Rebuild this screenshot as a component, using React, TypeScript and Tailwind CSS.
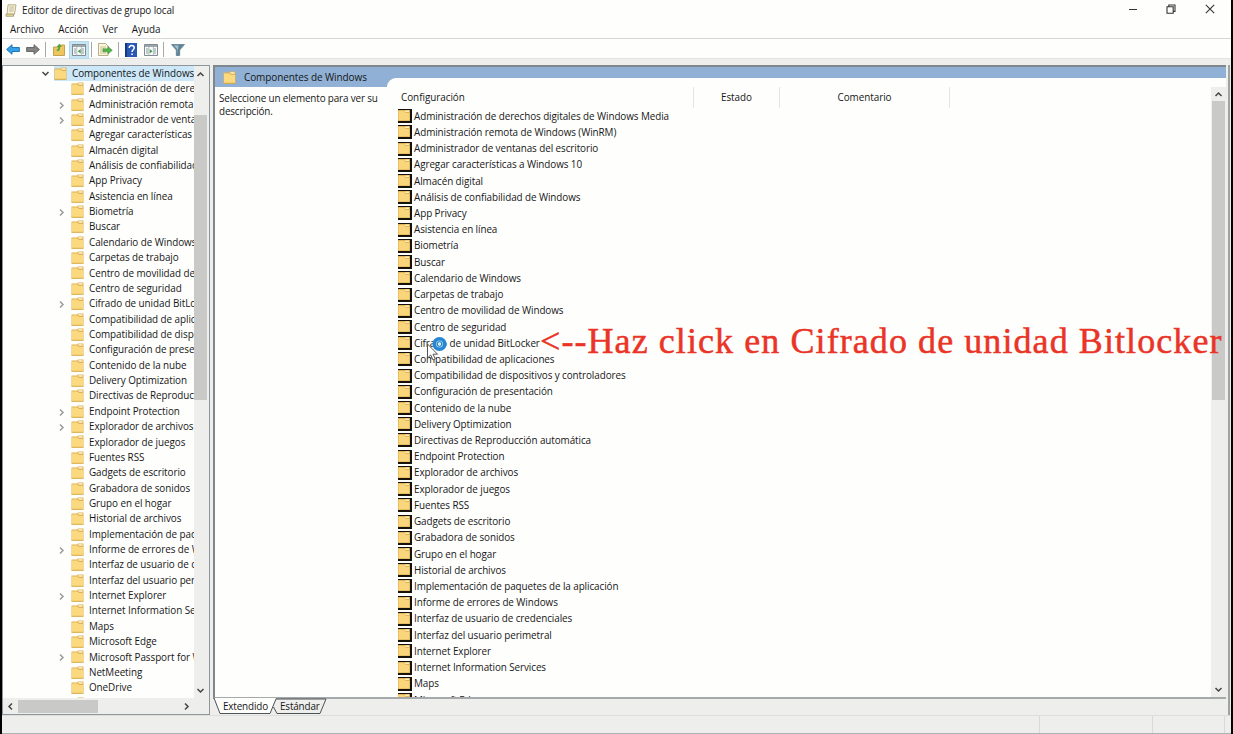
import React from "react";

const sections = [
  "Administración de derechos digitales de Windows Media",
  "Administración remota de Windows (WinRM)",
  "Administrador de ventanas del escritorio",
  "Agregar características a Windows 10",
  "Almacén digital",
  "Análisis de confiabilidad de Windows",
  "App Privacy",
  "Asistencia en línea",
  "Biometría",
  "Buscar",
  "Calendario de Windows",
  "Carpetas de trabajo",
  "Centro de movilidad de Windows",
  "Centro de seguridad",
  "Cifrado de unidad BitLocker",
  "Compatibilidad de aplicaciones",
  "Compatibilidad de dispositivos y controladores",
  "Configuración de presentación",
  "Contenido de la nube",
  "Delivery Optimization",
  "Directivas de Reproducción automática",
  "Endpoint Protection",
  "Explorador de archivos",
  "Explorador de juegos",
  "Fuentes RSS",
  "Gadgets de escritorio",
  "Grabadora de sonidos",
  "Grupo en el hogar",
  "Historial de archivos",
  "Implementación de paquetes de la aplicación",
  "Informe de errores de Windows",
  "Interfaz de usuario de credenciales",
  "Interfaz del usuario perimetral",
  "Internet Explorer",
  "Internet Information Services",
  "Maps",
  "Microsoft Edge",
  "Microsoft Passport for Work",
  "NetMeeting",
  "OneDrive",
  "Opciones",
];

const expandable = new Set([1, 2, 8, 14, 21, 22, 30, 33, 37]);

function Folder() {
  return (
    <svg className="h-[13px] w-[13px] shrink-0" viewBox="0 0 13 13">
      <path d="M.5 1.500h5.500l1-1h5.500v12H.5z" fill="#e0b255" />
      <path d="M1 2.500h5.500l1.500 1.500H12v8H1z" fill="#fbd97f" />
      <path d="M7 1.200h4.500v1.600H8z" fill="#fff3cd" />
      <path d="M.5 12.300h12" stroke="#d6a33a" strokeWidth=".8" />
    </svg>
  );
}

function ListFolder() {
  return (
    <svg className="h-[14px] w-[14px] shrink-0" viewBox="0 0 14 14">
      <path d="M0 0h14v14H0z" fill="#15120c" />
      <path d="M0 1h12V12H0z" fill="#d9a94c" />
      <path d="M.5 1.700h5.500l1.500 2h4V11.500H.5z" fill="#f9d57c" />
      <path d="M6.500 1.500h4.500v1.500H7.500z" fill="#fff0bd" />
    </svg>
  );
}

function Chevron({ dir, className = "" }: { dir: "up" | "down" | "left" | "right"; className?: string }) {
  const d = {
    up: "M1.5 6 4.500 3 7.500 6",
    down: "M1.500 3 4.500 6 7.500 3",
    left: "M6 1.500 3 4.500 6 7.500",
    right: "M3 1.500 6 4.500 3 7.500",
  }[dir];
  return (
    <svg className={"h-[9px] w-[9px] shrink-0 " + className} viewBox="0 0 9 9" fill="none" stroke="currentColor" strokeWidth="1.5">
      <path d={d} />
    </svg>
  );
}

function TitleBar() {
  return (
    <div className="flex h-[20px] items-center pl-[3px]">
      <svg className="h-[13px] w-[12px]" viewBox="0 0 12 13">
        <path d="M3 .8h8l-1.5 9.5H2z" fill="#fbf3cf" stroke="#a89c78" strokeWidth=".8" />
        <path d="M1 10h7.5v2.3H1z" fill="#e7d79b" stroke="#968a66" strokeWidth=".7" />
        <path d="M4.5 3h4.6M4.2 5h4.6M3.9 7h4.6" stroke="#9a9a94" strokeWidth=".7" />
      </svg>
      <span className="ml-[5px] text-[9.9px] tracking-[-0.11px]">Editor de directivas de grupo local</span>
      <div className="mt-[-2px] ml-auto flex items-center pr-[16px] text-[#333]">
        <svg className="h-[10px] w-[10px]" viewBox="0 0 10 10"><path d="M1 5.500h8" stroke="currentColor" /></svg>
        <svg className="ml-[28px] h-[10px] w-[10px]" viewBox="0 0 10 10" fill="none" stroke="currentColor" strokeWidth="1.1">
          <path d="M1 2.8h6.2V9.2H1zM2.8 2.8V1H9v6.5H7.2" />
        </svg>
        <svg className="ml-[29px] h-[10px] w-[10px]" viewBox="0 0 10 10" stroke="currentColor" strokeWidth="1.1"><path d="m.8.8 8.4 8.4M9.2.8.8 9.2" /></svg>
      </div>
    </div>
  );
}

function Divider({ className }: { className: string }) {
  return <div className={"h-[15px] w-px bg-[#a8a8a8] " + className} />;
}

function Pane({ back }: { back?: boolean }) {
  return (
    <svg className="h-[12px] w-[14px]" viewBox="0 0 14 12">
      <path d="M.5.5h13v11H.5z" fill="#f8fafa" stroke="#7f8b91" />
      <path d="M1 1h12v2H1z" fill="#9ba7ad" />
      <path d="M2 5h2M2 7h2M2 9h2M10 5h2M10 7h2M10 9h2" stroke="#8b989f" />
      <path d="M4.8 3v9M9.4 3v9" stroke="#98a4aa" strokeWidth=".7" />
      <path d={back ? "M8.7 5v4.5L5.8 7.3z" : "M5.7 5v4.5l2.8-2.2z"} fill="#3f9d43" />
    </svg>
  );
}

function Toolbar() {
  return (
    <div className="flex h-[20px] items-center border-t border-[#d6d6d6] pt-[2px] pl-[4px]">
      <svg className="h-[11px] w-[14px]" viewBox="0 0 14 11"><path d="M.6 5.5 6 .7v2.8h7.4v4H6v2.8z" fill="#36a0e7" stroke="#1470b5" strokeWidth=".9" /></svg>
      <svg className="ml-[6px] h-[11px] w-[14px]" viewBox="0 0 14 11"><path d="M13.4 5.5 8 .7v2.8H.6v4H8v2.8z" fill="#838383" stroke="#5d5d5d" strokeWidth=".9" /></svg>
      <Divider className="ml-[5px]" />
      <svg className="ml-[7px] h-[13px] w-[12px]" viewBox="0 0 12 13">
        <path d="M.5 4h5l1-2h5v10.5H.5z" fill="#edc660" stroke="#b8933a" strokeWidth=".8" />
        <path d="M4 8c3 0 3-2 3-4h1.8L6.3.7 3.6 4h1.7c0 1.5-.2 2.7-1.8 3z" fill="#47a447" />
      </svg>
      <div className="ml-[4px] flex h-[18px] w-[20px] items-center justify-center border border-[#b1d9ef] bg-[#c7e4f3]"><Pane back /></div>
      <Divider className="ml-[2px]" />
      <svg className="ml-[6px] h-[13px] w-[15px]" viewBox="0 0 15 13">
        <path d="M.5.5h7L10 3v9.5H.5z" fill="#fbf6d6" stroke="#a59b76" strokeWidth=".8" />
        <path d="M2 4h6M2 6h4M2 8h4M2 10h6" stroke="#b3aa87" strokeWidth=".7" />
        <path d="M5 5.8h5V3.5L14.3 7.3 10 11V8.8H5z" fill="#55b14b" stroke="#398a36" strokeWidth=".5" />
      </svg>
      <Divider className="ml-[5px]" />
      <svg className="ml-[6px] h-[14px] w-[12px]" viewBox="0 0 12 14">
        <path d="M0 0h12v14H0z" fill="#2857b5" />
        <path d="M0 0h2v14H0z" fill="#163782" />
        <path d="M4.2 5c0-3.4 5-3 5-.2C9.200 6.700 7 6.800 7 9" fill="none" stroke="#fff" strokeWidth="1.5" />
        <path d="M6.200 10.400h1.700V12H6.200z" fill="#fff" />
      </svg>
      <div className="ml-[7px] flex"><Pane /></div>
      <Divider className="ml-[5px]" />
      <svg className="ml-[7px] h-[12px] w-[14px]" viewBox="0 0 14 12">
        <path d="M.5.5h13L8.700 6v5.500H5.300V6z" fill="#5f8499" stroke="#56788b" strokeWidth=".7" />
        <path d="M3 1.600h4.500L6.500 10V5.500z" fill="#a4c1ce" />
      </svg>
    </div>
  );
}

function Tree() {
  return (
    <div className="flex h-[650px] w-[208px] shrink-0 flex-col border border-[#8f969b] bg-[#fefefd]">
      <div className="flex h-[632px]">
        <div className="w-[191px] shrink-0 overflow-hidden whitespace-nowrap text-[9.9px] tracking-[-0.06px]">
          <div className="flex h-[15px] items-center">
            <Chevron dir="down" className="ml-[38px] text-[#444]" />
            <div className="ml-[4px] flex h-[15px] flex-1 items-center bg-[#cbe7f8]">
              <Folder />
              <span className="ml-[5px]">Componentes de Windows</span>
            </div>
          </div>
          {sections.map((s, i) => (
            <div key={s} className="flex h-[15.36px] items-center">
              <div className="ml-[54px] flex w-[14px] shrink-0 pt-[2px] text-[#9b9b9b]">{expandable.has(i) && <Chevron dir="right" />}</div>
              <Folder />
              <span className="ml-[5px]">{s}</span>
            </div>
          ))}
        </div>
        <div className="flex flex-1 flex-col items-center bg-[#eeeeed] pt-[4px] text-[#444]">
          <Chevron dir="up" className="mr-[2px]" />
          <div className="mt-[36px] mr-[2px] h-[285px] w-[13px] bg-[#c9c9c8]" />
          <Chevron dir="down" className="mt-auto mr-[2px] mb-[3px]" />
        </div>
      </div>
      <div className="flex flex-1 items-center bg-[#eeeeed] text-[#444]">
        <Chevron dir="left" className="ml-[3px]" />
        <div className="ml-[3px] h-[13px] w-[80px] bg-[#c9c9c8]" />
        <Chevron dir="right" className="mr-[18px] ml-auto" />
      </div>
    </div>
  );
}

function Pointer() {
  return (
    <svg className="absolute top-[334px] left-[424px] h-[27px] w-[24px]" viewBox="0 0 24 27">
      <circle cx="13.500" cy="10" r="5.300" fill="#9ad3ef" stroke="#2786d4" strokeWidth="3.600" />
      <circle cx="13.500" cy="10" r="2.300" fill="#d5eef8" stroke="#1976bd" strokeWidth="1" />
      <path d="M1.500 10v14l3.200-3 2.300 5 2.300-1-2.300-4.800h4.500z" fill="#fff" stroke="#555" strokeWidth="1" />
    </svg>
  );
}

function Details() {
  return (
    <div className="flex min-w-0 flex-1 flex-col">
      <div className="flex h-[634px] border-2 border-r-0 border-[#7f878c] border-b-[#a5a9a9] bg-[#fefefd]">
        <div className="flex min-w-0 flex-1 flex-col">
          <div className="flex h-[20px] shrink-0 bg-[#90b1d5]">
            <div className="flex w-[172px] items-center pl-[8px] text-[10px]">
              <Folder />
              <span className="ml-[8px] tracking-[-0.1px]">Componentes de Windows</span>
            </div>
            <div className="mt-[11px] h-[9px] flex-1 rounded-tl-[9px] bg-[#fefefd]" />
          </div>
          <div className="flex min-h-0 flex-1">
            <div className="w-[174px] shrink-0 pt-[5px] pl-[4px] text-[9.9px] leading-[13px] tracking-[-0.14px]">
              Seleccione un elemento para ver su<br />descripción.
            </div>
            <div className="flex min-w-0 flex-1 flex-col overflow-hidden">
              <div className="flex h-[21px] shrink-0 text-[9.900px] leading-[20px] tracking-[-0.03px]">
                <div className="w-[305px] border-r border-[#e6e6e6] pl-[12px]">Configuración</div>
                <div className="w-[86px] border-r border-[#e6e6e6] text-center">Estado</div>
                <div className="w-[170px] border-r border-[#e6e6e6] text-center">Comentario</div>
              </div>
              <div className="min-h-0 flex-1 overflow-hidden pl-[9px] text-[9.9px] tracking-[-0.08px] whitespace-nowrap">
                {sections.slice(0, 37).map((s) => (
                  <div key={s} className="flex h-[16.22px] items-center">
                    <ListFolder />
                    <span className="ml-[2px]">{s}</span>
                  </div>
                ))}
              </div>
            </div>
            <div className="flex w-[14px] shrink-0 flex-col items-center bg-[#eeeeed] pt-[3px] text-[#444]">
              <Chevron dir="up" />
              <div className="mt-[2px] h-[299px] w-[13px] bg-[#c9c9c8]" />
              <Chevron dir="down" className="mt-auto mb-[3px]" />
            </div>
            <div className="w-px shrink-0 bg-[#eeeeed]" />
          </div>
        </div>
      </div>
      <div className="h-[16px] text-[9.9px]">
        <div className="relative flex h-[15px] items-center">
          <svg className="absolute top-[-1px] left-0 h-[17px] w-[116px]" viewBox="0 0 116 17">
            <path d="M1 0 7 15.500h50L63 0z" fill="#fefefd" />
            <path d="M1 0 7 15.500h50L63 1h50l-6 14.500H64L60.500 9" fill="none" stroke="#4e5356" />
          </svg>
          <span className="relative ml-[10px] w-[57px] tracking-[-0.15px]">Extendido</span>
          <span className="relative tracking-[-0.15px]">Estándar</span>
        </div>
      </div>
    </div>
  );
}

export default function App() {
  return (
    <div className="relative h-[734px] w-[1233px] overflow-hidden border-r-2 border-l-2 border-black bg-[#fefefd] font-['Open_Sans','Noto_Sans',sans-serif] text-[#161616]">
      <TitleBar />
      <div className="flex h-[18px] items-center gap-[14px] pl-[8px] text-[9.900px] tracking-[-0.02px]">
        <span>Archivo</span><span>Acción</span><span>Ver</span><span>Ayuda</span>
      </div>
      <Toolbar />
      <div className="flex h-[657px] border-t border-[#e4e4e4] bg-[#eeeeed] pt-[6px]">
        <Tree />
        <div className="w-[3px]" />
        <Details />
        <div className="mr-[1px] ml-[2px] w-[2px] bg-[#a0a1a1]" />
      </div>
      <div className="flex h-[19px] justify-end border-t border-b border-t-[#dededd] border-b-[#aeb2b2] bg-[#eeeeed]">
        <div className="w-[113px] border-l border-[#d9d9d8]" />
        <div className="w-[73px] border-r border-l border-[#d9d9d8]" />
        <div className="w-[6px]" />
      </div>
      <div className="absolute top-[320px] left-[538px] font-['Liberation_Serif',serif] text-[36px] leading-[42px] tracking-[1.08px] whitespace-nowrap text-[#ea3426] [-webkit-text-stroke:0.5px_#ea3426]">
        &lt;--Haz click en Cifrado de unidad Bitlocker
      </div>
      <Pointer />
    </div>
  );
}
